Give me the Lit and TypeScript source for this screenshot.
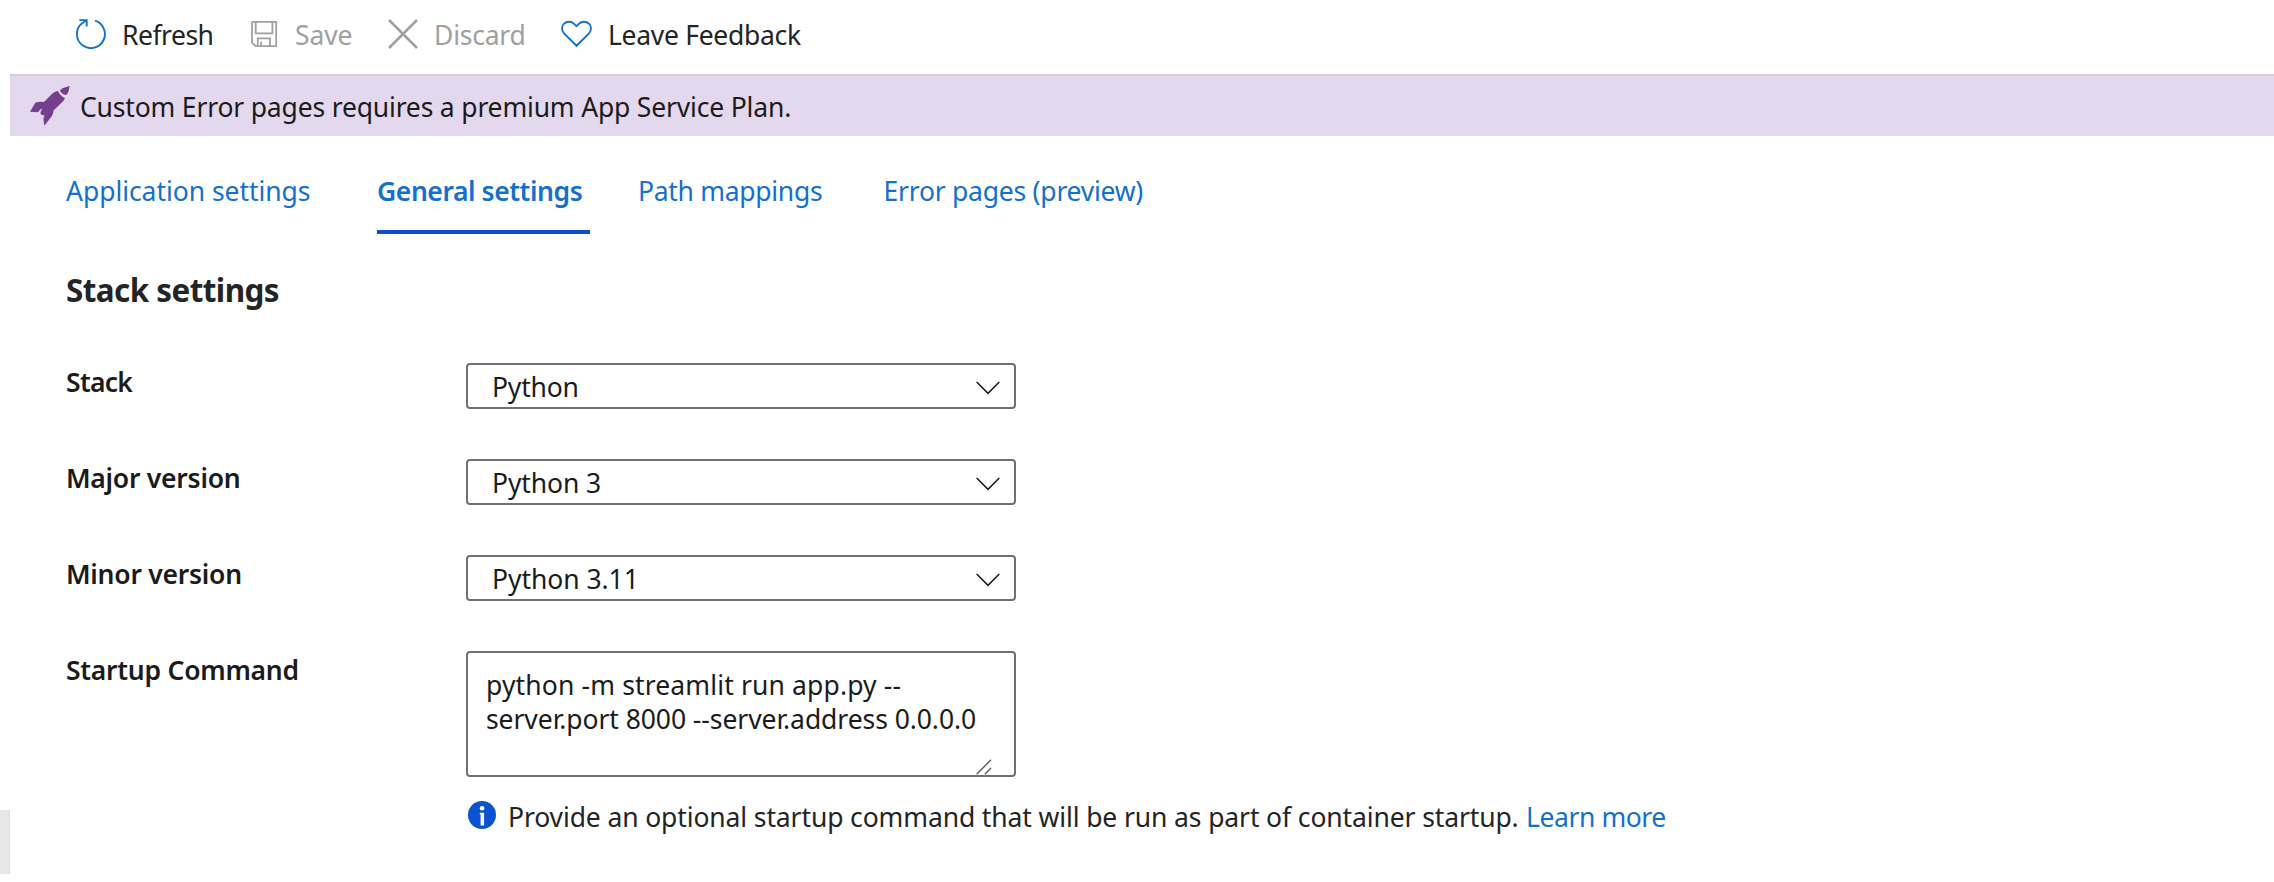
import { LitElement, html, css } from "lit";
import { customElement, property } from "lit/decorators.js";

const refreshIcon = html`<svg width="30" height="30" viewBox="0 0 30 30" fill="none" stroke="#146fcd" stroke-width="1.9">
  <path d="M19 1.7A14 14 0 1 1 5 5.2L10.4 1.2" />
  <path d="M3.4 1.1H10.7V7.6" />
</svg>`;

const saveIcon = html`<svg width="30" height="30" viewBox="0 0 30 30" fill="none" stroke="#a0a0a0" stroke-width="1.8">
  <path d="M3.4 2.9H27.2V27.1H6.6L3 23.9V3.4Z" stroke-linejoin="round" />
  <path d="M6.7 3V14.3H23.4V3" />
  <path d="M8.8 27V19.4H20.9V27M12.2 22.4V27" />
</svg>`;

const discardIcon = html`<svg width="30" height="30" viewBox="0 0 30 30" fill="none" stroke="#a0a0a0" stroke-width="2.6">
  <path d="M1 1L29 29M29 1L1 29" />
</svg>`;

const heartIcon = html`<svg width="31" height="30" viewBox="0 0 31 30" fill="none" stroke="#146fcd" stroke-width="1.9">
  <path d="M15.5 26.8L3.2 14.7C.2 11.5.4 7 3.1 4.6C6 2 10.3 2.2 12.9 4.6L15.5 7.2L18.1 4.6C20.7 2.2 25 2 27.9 4.6C30.6 7 30.8 11.5 27.8 14.7Z" />
</svg>`;

const rocketIcon = html`<svg width="40" height="40" viewBox="0 0 120 120" fill="#743f8d">
  <path d="M119 0L99 6Q93 9 90 14Q95 24 108 27Q113 23 115 18Z" />
  <path d="M84 15Q89 28 105 37Q102 44 94 51L71 73Q70 84 64 92L43 119L40 97L45 88Q38 89 32 85Q30 78 37 67Q30 70 24 79L0 77L16 50Q28 45 42 48L68 22Q75 16 84 15Z" />
</svg>`;

const chevronIcon = html`<svg width="24" height="14" viewBox="0 0 24 14" fill="none" stroke="#1b1b1b" stroke-width="1.6">
  <path d="M.7 1L12 12.4L23.3 1" />
</svg>`;

const infoIcon = html`<svg width="28" height="28" viewBox="0 0 28 28">
  <circle cx="14" cy="14" r="14" fill="#0b52d0" />
  <circle cx="14.1" cy="7.2" r="2.3" fill="#fff" />
  <path d="M11.8 11.8H16.1V24.6H12.6V13.4H11.8Z" fill="#fff" />
</svg>`;

@customElement("setting-row")
class SettingRow extends LitElement {
  @property() label = "";
  @property() tone = "";

  static styles = css`
    :host {
      display: grid;
      grid-template-columns: 400px 1fr;
      align-items: start;
    }
    .label {
      padding-top: 1px;
      font-weight: 600;
      line-height: 36px;
      color: #1b1b1b;
      letter-spacing: -0.25px;
    }
    .tight {
      letter-spacing: -0.7px;
    }
  `;

  render() {
    return html`<div class="label ${this.tone}">${this.label}</div><slot></slot>`;
  }
}

@customElement("select-box")
class SelectBox extends LitElement {
  @property() value = "";

  static styles = css`
    :host {
      box-sizing: border-box;
      display: flex;
      align-items: center;
      justify-content: space-between;
      width: 550px;
      height: 46px;
      padding: 0 14px 0 24px;
      border: 2px solid #707070;
      border-radius: 4px;
      color: #1b1b1b;
    }
    .value {
      padding-top: 1px;
    }
    svg {
      display: block;
      margin-top: 3px;
    }
  `;

  render() {
    return html`<span class="value">${this.value}</span>${chevronIcon}`;
  }
}

@customElement("app-root")
class AppRoot extends LitElement {
  static styles = css`
    :host {
      display: grid;
      grid-template-columns: 10px 1fr;
      height: 882px;
      overflow: hidden;
      background: #fff;
      color: #242424;
      font: 26.5px/36px "Noto Sans", "Open Sans", sans-serif;
      white-space: nowrap;
    }
    svg {
      display: block;
      flex: none;
    }
    .gutter {
      padding-top: 810px;
    }
    .thumb {
      box-sizing: border-box;
      height: 64px;
      background: #e8e7e5;
      border-right: 1px solid #dfdedc;
    }
    .toolbar {
      box-sizing: border-box;
      display: grid;
      grid-template-columns: 173px 139px 173px auto;
      justify-content: start;
      height: 76px;
      padding: 17px 0 0 66px;
      border-bottom: 2px solid #d0d0d0;
    }
    .command {
      display: flex;
      gap: 16px;
      align-items: flex-start;
    }
    .command svg {
      margin-top: 2px;
    }
    .disabled {
      color: #a0a0a0;
    }
    .refresh { letter-spacing: -0.5px; }
    .save { letter-spacing: -0.1px; }
    .discard { letter-spacing: -0.22px; }
    .feedback { letter-spacing: -0.3px; }
    .banner {
      display: flex;
      gap: 10px;
      height: 60px;
      padding-left: 20px;
      background: #e4d8ef;
      color: #1b1b1b;
      letter-spacing: -0.178px;
    }
    .banner svg {
      margin-top: 10px;
    }
    .banner span {
      padding-top: 13px;
    }
    .content {
      padding-left: 56px;
    }
    .tabs {
      display: grid;
      grid-template-columns: 311px 261px 245.5px auto;
      justify-content: start;
      padding-top: 37px;
      line-height: 37px;
      color: #146fcd;
    }
    .tab {
      justify-self: start;
      padding-bottom: 20px;
      border-bottom: 4px solid transparent;
    }
    .application { letter-spacing: -0.05px; }
    .general {
      box-sizing: border-box;
      width: 213px;
      font-weight: 600;
      letter-spacing: -0.43px;
      border-bottom-color: #0b4fd0;
    }
    .path { letter-spacing: -0.3px; }
    .error { letter-spacing: -0.237px; }
    h2 {
      margin: 35px 0 52px;
      font-size: 31.4px;
      line-height: 42px;
      font-weight: 700;
      letter-spacing: -0.547px;
    }
    .form {
      display: flex;
      flex-direction: column;
      gap: 50px;
    }
    .python { letter-spacing: -0.18px; }
    .major { letter-spacing: -0.1px; }
    .minor { letter-spacing: -0.05px; }
    .command-box {
      position: relative;
      box-sizing: border-box;
      width: 550px;
      height: 126px;
      padding: 15px 0 0 18px;
      border: 2px solid #707070;
      border-radius: 4px;
      color: #1b1b1b;
      line-height: 34px;
    }
    .line {
      letter-spacing: 0.14px;
    }
    .line + .line {
      letter-spacing: -0.07px;
    }
    .grip {
      position: absolute;
      right: 22px;
      bottom: 0;
    }
    .hint {
      display: flex;
      margin-top: 22px;
      padding-left: 2px;
      letter-spacing: -0.12px;
    }
    .hint svg {
      margin: 2px 12px 0 0;
    }
    .link {
      margin-left: 7.5px;
      color: #146fcd;
      letter-spacing: -0.44px;
    }
  `;

  render() {
    return html`
      <div class="gutter"><div class="thumb"></div></div>
      <main>
        <div class="toolbar">
          <div class="command refresh">${refreshIcon}<span>Refresh</span></div>
          <div class="command save disabled">${saveIcon}<span>Save</span></div>
          <div class="command discard disabled">${discardIcon}<span>Discard</span></div>
          <div class="command feedback">${heartIcon}<span>Leave Feedback</span></div>
        </div>
        <div class="banner">${rocketIcon}<span>Custom Error pages requires a premium App Service Plan.</span></div>
        <div class="content">
          <nav class="tabs">
            <div class="tab application">Application settings</div>
            <div class="tab general">General settings</div>
            <div class="tab path">Path mappings</div>
            <div class="tab error">Error pages (preview)</div>
          </nav>
          <h2>Stack settings</h2>
          <div class="form">
            <setting-row label="Stack" tone="tight"><select-box class="python" value="Python"></select-box></setting-row>
            <setting-row label="Major version"><select-box class="major" value="Python 3"></select-box></setting-row>
            <setting-row label="Minor version"><select-box class="minor" value="Python 3.11"></select-box></setting-row>
            <setting-row label="Startup Command">
              <div>
                <div class="command-box">
                  <div class="line">python -m streamlit run app.py --</div>
                  <div class="line">server.port 8000 --server.address 0.0.0.0</div>
                  <svg class="grip" width="16" height="16" viewBox="0 0 16 16" fill="none" stroke="#5c5c5c" stroke-width="1.4">
                    <path d="M.6 15.2L15 .8M8.8 15.2L15 9" />
                  </svg>
                </div>
                <div class="hint">
                  ${infoIcon}<span>Provide an optional startup command that will be run as part of container startup.</span><span class="link">Learn more</span>
                </div>
              </div>
            </setting-row>
          </div>
        </div>
      </main>
    `;
  }
}
